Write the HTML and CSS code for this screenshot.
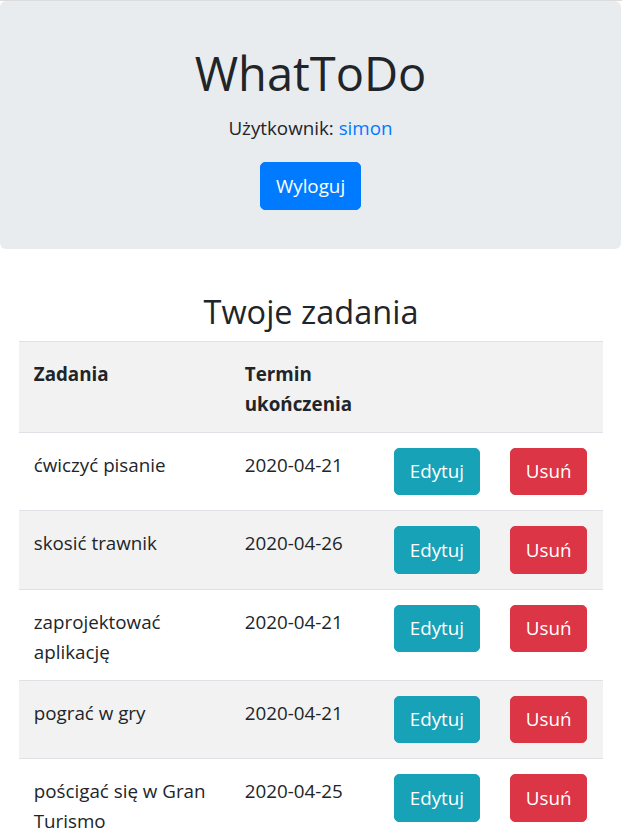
FILE: index.html
```html
<!DOCTYPE html>
<html lang="pl">
<head>
<meta charset="utf-8">
<title>WhatToDo</title>
<link rel="stylesheet" href="styles.css">
</head>
<body>
<div class="jumbotron">
  <h1 class="title">WhatToDo</h1>
  <p class="user">Użytkownik: <a href="#" class="link">simon</a></p>
  <a href="#" class="btn btn-primary">Wyloguj</a>
</div>
<div class="container">
  <h3 class="subtitle">Twoje zadania</h3>
  <table class="table">
    <colgroup>
      <col class="c1"><col class="c2"><col class="c3"><col class="c4">
    </colgroup>
    <thead>
      <tr><th>Zadania</th><th>Termin ukończenia</th><th></th><th></th></tr>
    </thead>
    <tbody>
      <tr><td>ćwiczyć pisanie</td><td>2020-04-21</td><td><a href="#" class="btn btn-info">Edytuj</a></td><td><a href="#" class="btn btn-danger">Usuń</a></td></tr>
      <tr class="odd"><td>skosić trawnik</td><td>2020-04-26</td><td><a href="#" class="btn btn-info">Edytuj</a></td><td><a href="#" class="btn btn-danger">Usuń</a></td></tr>
      <tr><td>zaprojektować aplikację</td><td>2020-04-21</td><td><a href="#" class="btn btn-info">Edytuj</a></td><td><a href="#" class="btn btn-danger">Usuń</a></td></tr>
      <tr class="odd"><td>pograć w gry</td><td>2020-04-21</td><td><a href="#" class="btn btn-info">Edytuj</a></td><td><a href="#" class="btn btn-danger">Usuń</a></td></tr>
      <tr><td>pościgać się w Gran Turismo</td><td>2020-04-25</td><td><a href="#" class="btn btn-info">Edytuj</a></td><td><a href="#" class="btn btn-danger">Usuń</a></td></tr>
    </tbody>
  </table>
</div>
</body>
</html>
```
FILE: styles.css
```css
* { box-sizing: border-box; }
html, body { margin: 0; padding: 0; }
body {
  font-family: "Open Sans", "Noto Sans", sans-serif;
  font-size: 18.8px;
  line-height: 30px;
  color: #212529;
  background: #fff;
  border-top: 1px solid #dcdcdc;
}
.jumbotron {
  background: #e9ecef;
  border-radius: 6px;
  padding: 42px 20px 39px;
  margin: 0 1px 40px 0;
  text-align: center;
}
.title {
  font-size: 47px;
  line-height: 60px;
  font-weight: 400;
  margin: 0 0 10px;
}
.user { margin: 0 0 19px; }
.link { color: #007bff; text-decoration: none; }
.btn {
  display: inline-block;
  font-size: 18.8px;
  line-height: 30px;
  padding: 7.75px 15px;
  border: 1px solid transparent;
  border-radius: 5px;
  color: #fff;
  text-decoration: none;
  vertical-align: top;
}
.btn-primary { background: #007bff; border-color: #007bff; }
.btn-info { background: #17a2b8; border-color: #17a2b8; }
.btn-danger { background: #dc3545; border-color: #dc3545; }
.container { padding: 0 18.75px; }
.subtitle {
  text-align: center;
  font-size: 32.5px;
  line-height: 42px;
  font-weight: 400;
  padding-top: 2px;
  margin: 0 0 8px;
}
.table {
  width: 100%;
  border-collapse: collapse;
  table-layout: fixed;
}
.c1 { width: 211px; }
.c2 { width: 149px; }
.c3 { width: 116px; }
.table th, .table td {
  padding: 17px 15px 13px;
  text-align: left;
  vertical-align: top;
  border-top: 1px solid #dee2e6;
}
.table td .btn { margin: -2px 0 2px; }
.table th { font-weight: 700; border-bottom: 1px solid #dee2e6; }
.table thead tr, .table tr.odd { background: #f2f2f2; }
```
